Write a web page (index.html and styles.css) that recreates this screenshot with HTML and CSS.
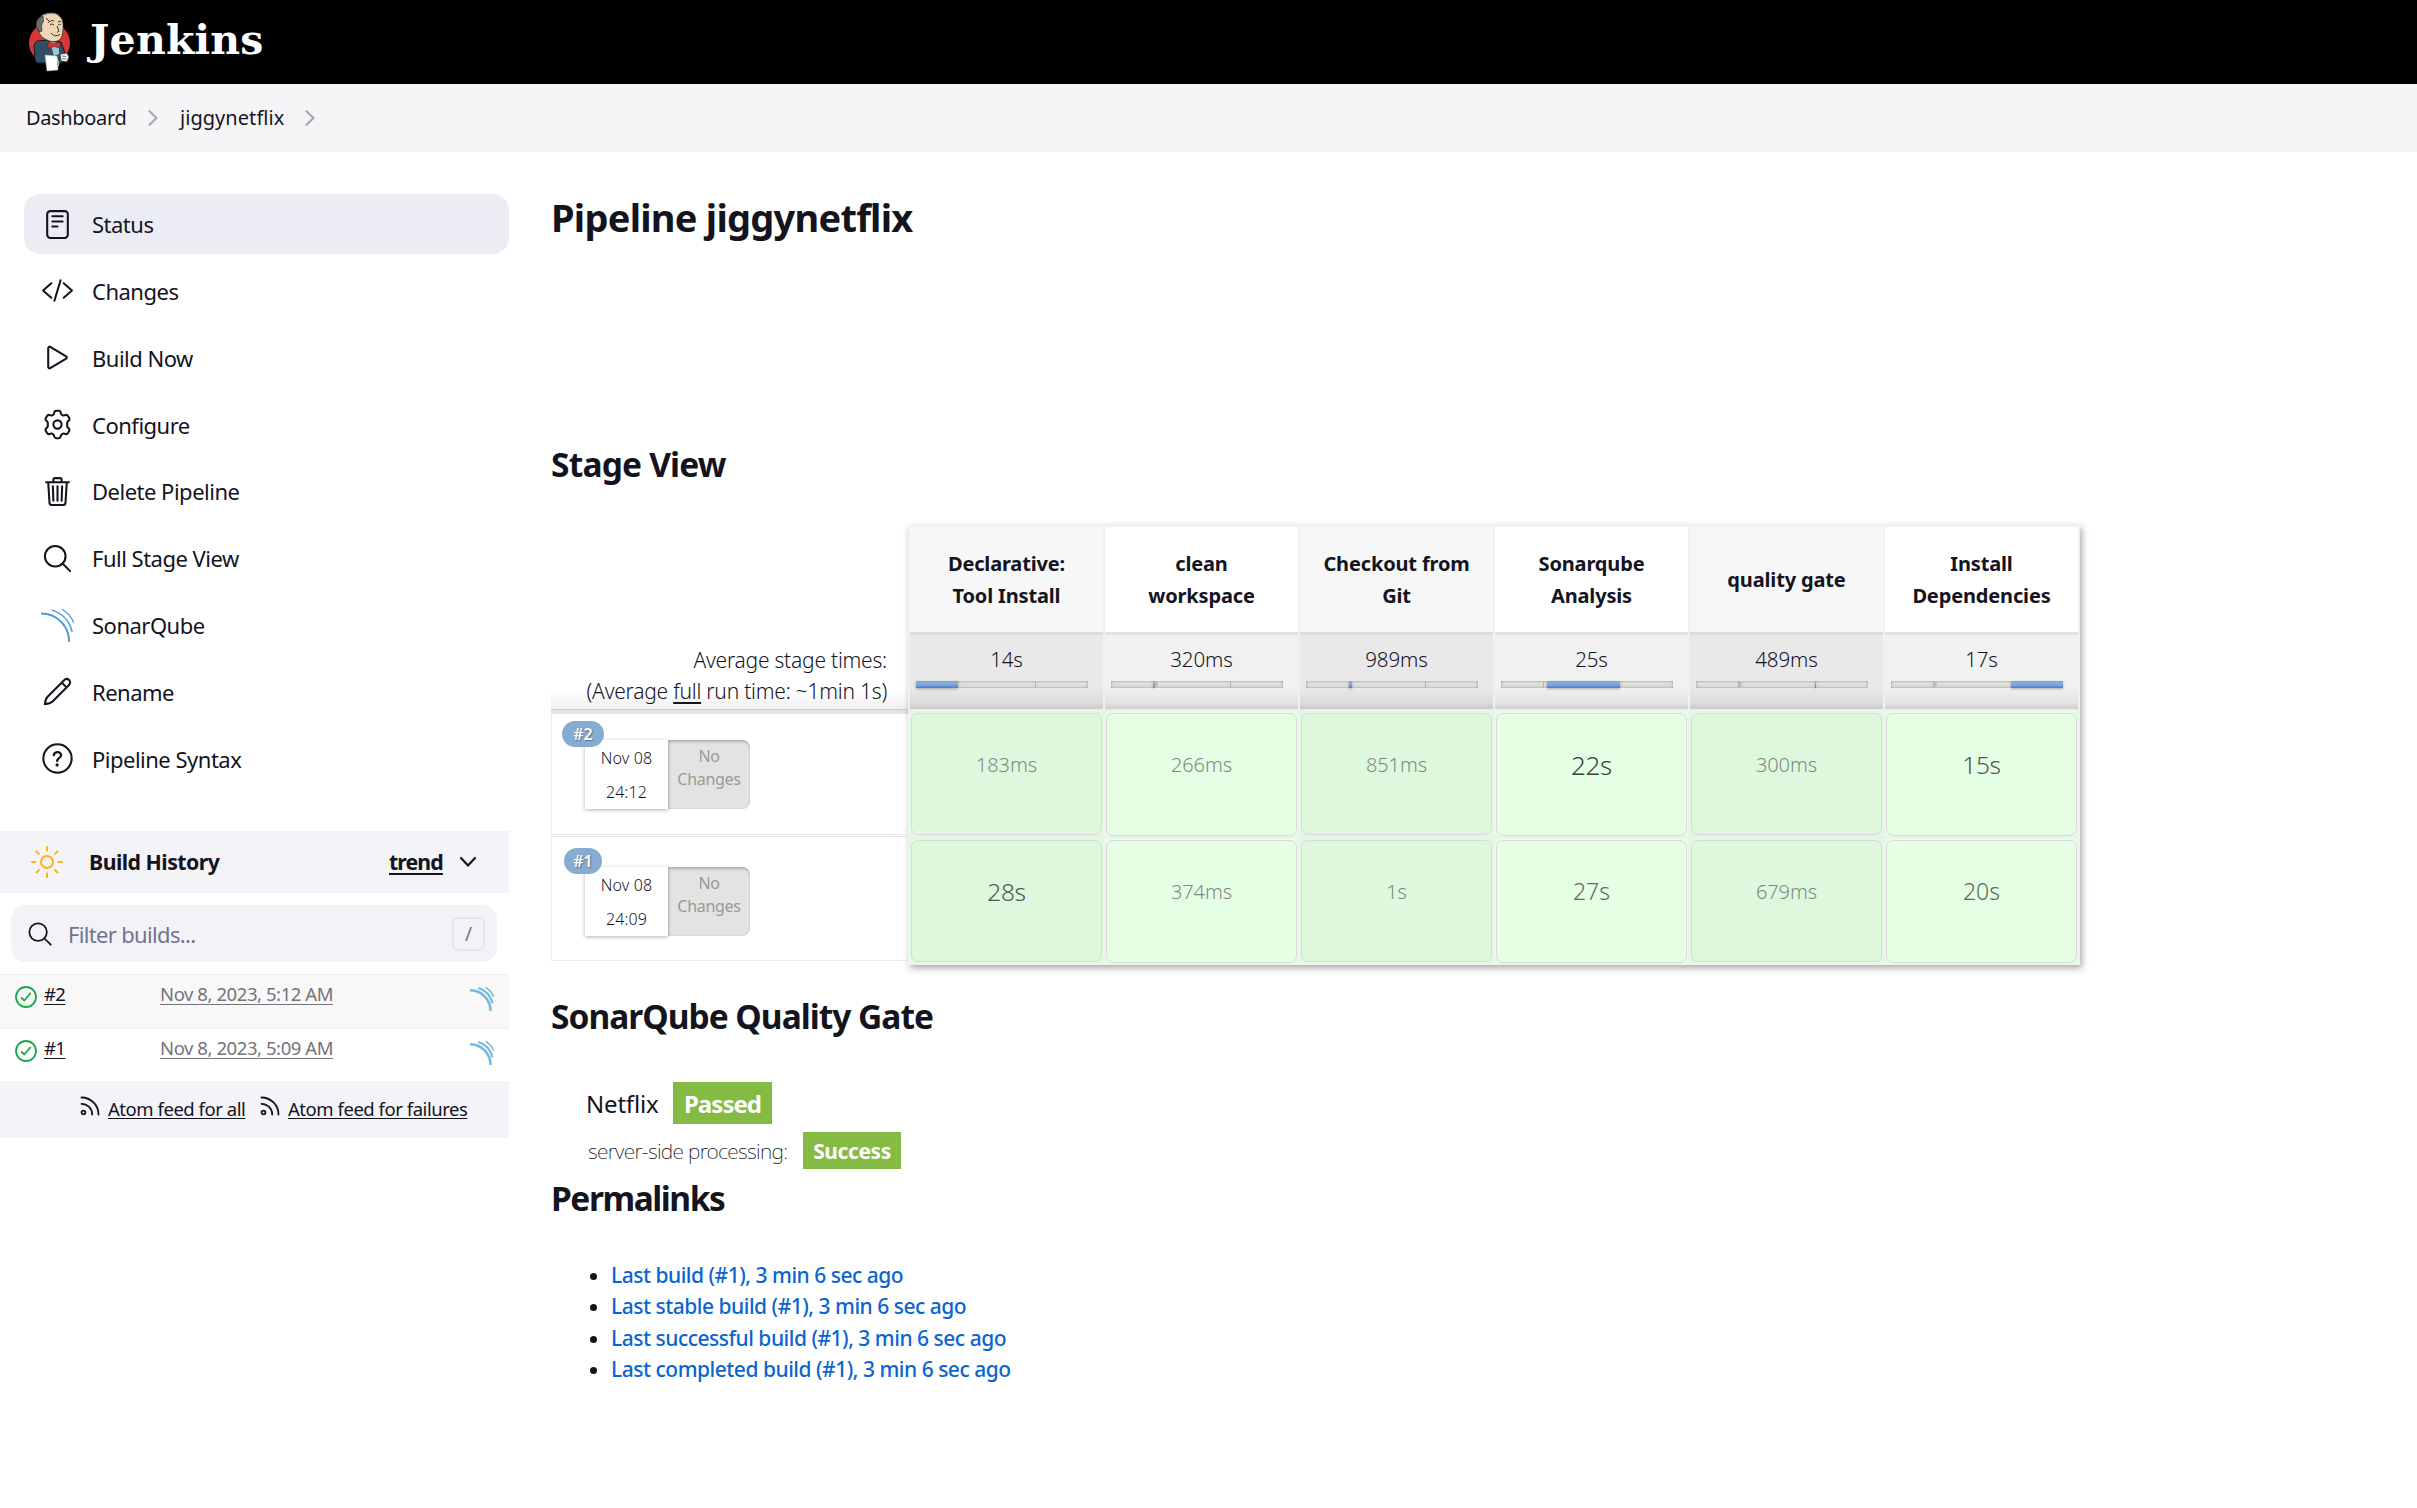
FILE: index.html
```html
<!DOCTYPE html>
<html lang="en">
<head>
<meta charset="utf-8">
<title>jiggynetflix [Jenkins]</title>
<link rel="stylesheet" href="styles.css">
</head>
<body>
<svg class="defs" width="0" height="0" aria-hidden="true">
  <symbol id="sonar" viewBox="0 0 33 33"><g fill="none" stroke="#4b9fd5"><path stroke-width="2" d="M0 4.6C16 4.6 28.2 17 28.2 33"/><path stroke-width="1.6" d="M11.5 1.3C21 4.3 28.500 12 31 22.300"/><path stroke-width="1.300" d="M21.500.5C26.300 3.300 30.300 8 32.600 13.300"/></g></symbol>
  <symbol id="sonar-s" viewBox="0 0 33 33"><g fill="none" stroke="#74b6e0"><path stroke-width="3.400" d="M0 4.6C16 4.6 28.2 17 28.2 33"/><path stroke-width="2.800" d="M11.5 1.3C21 4.3 28.500 12 31 22.300"/><path stroke-width="2.200" d="M21.500.5C26.300 3.300 30.300 8 32.600 13.300"/></g></symbol>
  <symbol id="search" viewBox="0 0 512 512"><g fill="none" stroke="currentColor" stroke-width="32" stroke-linecap="round"><circle cx="221" cy="221" r="160"/><path d="M338.300 338.300L452 452"/></g></symbol>
  <symbol id="rss" viewBox="0 0 20 20"><g fill="none" stroke="currentColor" stroke-width="1.800" stroke-linecap="round"><circle cx="3.500" cy="16.500" r="1.900"/><path d="M1.500 7.800A10.700 10.700 0 0 1 12.200 18.500M1.500 1.500A17 17 0 0 1 18.500 18.500"/></g></symbol>
  <symbol id="ok" viewBox="0 0 22 22"><g fill="none" stroke="#1ea64b" stroke-width="1.800" stroke-linecap="round" stroke-linejoin="round"><circle cx="11" cy="11" r="10"/><path d="M15.300 7.500L9.300 14.500 6.700 12"/></g></symbol>
  <symbol id="chev" viewBox="0 0 10 16"><path d="M1.500 1.200L8.500 8l-7 6.800" fill="none" stroke="#a6a6bf" stroke-width="2.200" stroke-linecap="round" stroke-linejoin="round"/></symbol>
</svg>

<header class="header">
  <svg class="butler" viewBox="0 0 44 60">
    <ellipse cx="21.500" cy="31" rx="20.500" ry="20" fill="#d33833"/>
    <path d="M9 29L20 28l13 2 4 11-3 10H9L7 48 6 33z" fill="#2f4f66" stroke="#0e1a24" stroke-width="1"/>
    <path d="M22 30l9 1 0 11-5 2z" fill="#9cc3d8"/>
    <path d="M13 4C19-1 30 0 34 7c2 6 1 12 0 17-2 6-9 7-15 4-6-2-9-8-9-14z" fill="#f0d6b7" stroke="#2b2522" stroke-width=".7"/>
    <path d="M15 4C10 5 7 10 8.500 15l3 5 2.500-1-.500-6 2-4z" fill="#6d6b6d" stroke="#222" stroke-width=".6"/>
    <path d="M16 3C20 1 28 0 31 4" fill="none" stroke="#8a8585" stroke-width="1.200"/>
    <path d="M22 13c1.500-1.500 3-1 4 0M30 13c1-1 2-1 3 0M29 14l2 5-2 1.500M23 21c3 4 7 3 9 1M18 6l3 3M20 11c1-2 4-3 6-2M30 10l3-1" fill="none" stroke="#3a2a22" stroke-width="1"/>
    <path d="M20 30l6 2 6-2v6l-6-1.500-6 2z" fill="#d33833" stroke="#611" stroke-width=".6"/>
    <path d="M17 43l12 1 1 14-11 1z" fill="#fff" stroke="#aaa" stroke-width=".6"/>
    <path d="M32 42l7-1 2 4-2 5-6-1z" fill="#f7f2ee" stroke="#333" stroke-width=".8"/>
    <path d="M34 44l4 .5M34 46.500l4 .500" stroke="#444" stroke-width=".7"/>
    <path d="M29 46l2 6-2 4" fill="none" stroke="#ddd" stroke-width="1"/>
  </svg>
  <span class="brand">Jenkins</span>
</header>

<nav class="crumbs">
  <span class="crumb-a">Dashboard</span>
  <svg class="chev"><use href="#chev"/></svg>
  <span class="crumb-b">jiggynetflix</span>
  <svg class="chev"><use href="#chev"/></svg>
</nav>

<div class="page">
  <aside class="side">
    <ul class="tasks">
      <li class="task active"><svg class="ico" viewBox="0 0 512 512"><rect x="96" y="48" width="320" height="416" rx="48"/><path d="M176 128h160M176 208h160M176 288h80"/></svg><span>Status</span></li>
      <li class="task"><svg class="ico" viewBox="0 0 512 512"><path d="M160 368L32 256l128-112M352 368l128-112-128-112M304 96l-96 320"/></svg><span>Changes</span></li>
      <li class="task"><svg class="ico" viewBox="0 0 512 512"><path d="M112 111v290c0 17.440 17 28.520 31 20.160l247.900-148.370c12.120-7.250 12.120-26.330 0-33.580L143 90.840c-14-8.360-31 2.720-31 20.160z"/></svg><span>Build Now</span></li>
      <li class="task"><svg class="ico" viewBox="0 0 512 512"><circle cx="256" cy="256" r="64"/><path d="M206 68Q212 42 236 42h40q24 0 30 26l4 16q5 18 21 26 16 9 33 4l18-5q23-7 36 14l20 34q12 20-5 37l-14 13q-13 12-13 31v36q0 19 13 31l14 13q17 17 5 37l-20 34q-13 21-36 14l-18-5q-17-5-33 4-16 8-21 26l-4 16q-6 26-30 26h-40q-24 0-30-26l-4-16q-5-18-21-26-16-9-33-4l-18 5q-23 7-36-14l-20-34q-12-20 5-37l14-13q13-12 13-31v-36q0-19-13-31l-14-13q-17-17-5-37l20-34q13-21 36-14l18 5q17 5 33-4 16-8 21-26z"/></svg><span>Configure</span></li>
      <li class="task"><svg class="ico" viewBox="0 0 512 512"><path d="M112 112l20 320c.950 18.490 14.400 32 32 32h184c17.670 0 30.870-13.510 32-32l20-320M80 112h352M192 112V72a24 24 0 0124-24h80a24 24 0 0124 24v40M256 176v224M184 176l8 224M328 176l-8 224"/></svg><span>Delete Pipeline</span></li>
      <li class="task"><svg class="ico"><use href="#search"/></svg><span>Full Stage View</span></li>
      <li class="task"><svg class="ico sonar"><use href="#sonar"/></svg><span>SonarQube</span></li>
      <li class="task"><svg class="ico" viewBox="0 0 512 512"><path d="M60 452C64 412 76 362 102 336L358 80C380 58 412 56 436 78 C458 100 456 132 434 154L180 410C152 436 102 448 60 452ZM322 118L396 192"/></svg><span>Rename</span></li>
      <li class="task"><svg class="ico" viewBox="0 0 512 512"><circle cx="256" cy="256" r="220"/><path d="M200 202s1-17 20-32c11-9 24-12 36-12 11 0 21 2 27 4 10 5 29 17 29 41 0 26-17 38-36 51s-25 27-25 40" stroke-width="36"/><circle cx="250" cy="356" r="12" stroke-width="28"/></svg><span>Pipeline Syntax</span></li>
    </ul>

    <section class="history">
      <div class="h-head">
        <svg class="sun" viewBox="0 0 34 34"><circle cx="17" cy="17" r="6"/><path d="M17 2v3.500M17 28.500V32M2 17h3.500M28.500 17H32M6.400 6.400l2.500 2.500M25.100 25.100l2.500 2.500M6.400 27.600l2.500-2.500M25.100 8.900l2.500-2.500"/></svg>
        <b class="h-title">Build History</b>
        <a class="trend">trend</a>
        <svg class="down" viewBox="0 0 18 12"><path d="M2 2l7 7.500L16 2" fill="none" stroke="#14141f" stroke-width="2.200" stroke-linecap="round" stroke-linejoin="round"/></svg>
      </div>
      <div class="filter">
        <svg class="f-ico"><use href="#search"/></svg>
        <span class="f-text">Filter builds...</span>
        <span class="key">/</span>
      </div>
      <div class="build odd"><svg class="ok"><use href="#ok"/></svg><a class="num">#2</a><a class="date">Nov 8, 2023, 5:12 AM</a><svg class="mini"><use href="#sonar-s"/></svg></div>
      <div class="build"><svg class="ok"><use href="#ok"/></svg><a class="num">#1</a><a class="date">Nov 8, 2023, 5:09 AM</a><svg class="mini"><use href="#sonar-s"/></svg></div>
      <div class="feeds">
        <svg class="rss"><use href="#rss"/></svg><a class="feed-all">Atom feed for all</a>
        <svg class="rss"><use href="#rss"/></svg><a>Atom feed for failures</a>
      </div>
    </section>
  </aside>

  <main class="main">
    <h1>Pipeline jiggynetflix</h1>
    <h2 class="sv">Stage View</h2>
    <div class="stage">
      <div class="runs">
        <div class="avg-label">Average stage times:<br>(Average <u>full</u> run time: ~1min 1s)</div>
        <div class="run"><span class="badge">#2</span><div class="card"><div class="when">Nov 08<br>24:12</div><div class="nochg">No<br>Changes</div></div></div>
        <div class="run"><span class="badge one">#1</span><div class="card"><div class="when">Nov 08<br>24:09</div><div class="nochg">No<br>Changes</div></div></div>
      </div>
      <div class="grid">
        <div class="col dark">
          <div class="name">Declarative:<br>Tool Install</div>
          <div class="avg"><span>14s</span><div class="track"><i class="fill" style="left:0;width:42px"></i><i class="tick" style="left:119px"></i></div></div>
          <div class="cell"><div class="box s">183ms</div></div>
          <div class="cell"><div class="box l">28s</div></div>
        </div>
        <div class="col">
          <div class="name">clean<br>workspace</div>
          <div class="avg"><span>320ms</span><div class="track"><i class="fill" style="left:42px;width:1px"></i><i class="tick wide" style="left:43px"></i><i class="tick" style="left:119px"></i></div></div>
          <div class="cell"><div class="box s">266ms</div></div>
          <div class="cell"><div class="box s">374ms</div></div>
        </div>
        <div class="col dark">
          <div class="name">Checkout from<br>Git</div>
          <div class="avg"><span>989ms</span><div class="track"><i class="fill" style="left:43px;width:3px"></i><i class="tick" style="left:119px"></i></div></div>
          <div class="cell"><div class="box s">851ms</div></div>
          <div class="cell"><div class="box s">1s</div></div>
        </div>
        <div class="col">
          <div class="name">Sonarqube<br>Analysis</div>
          <div class="avg"><span>25s</span><div class="track"><i class="tick" style="left:42px"></i><i class="fill" style="left:46px;width:73px"></i></div></div>
          <div class="cell"><div class="box xl">22s</div></div>
          <div class="cell"><div class="box m">27s</div></div>
        </div>
        <div class="col dark">
          <div class="name">quality gate</div>
          <div class="avg"><span>489ms</span><div class="track"><i class="tick wide" style="left:42px"></i><i class="fill" style="left:119px;width:1px"></i></div></div>
          <div class="cell"><div class="box s">300ms</div></div>
          <div class="cell"><div class="box s">679ms</div></div>
        </div>
        <div class="col">
          <div class="name">Install<br>Dependencies</div>
          <div class="avg"><span>17s</span><div class="track"><i class="tick wide" style="left:42px"></i><i class="fill" style="left:120px;width:52px"></i></div></div>
          <div class="cell"><div class="box l">15s</div></div>
          <div class="cell"><div class="box m">20s</div></div>
        </div>
      </div>
    </div>

    <h2 class="qg">SonarQube Quality Gate</h2>
    <div class="gate"><span class="proj">Netflix</span><span class="pass">Passed</span></div>
    <div class="gate2"><span class="ssp">server-side processing:</span><span class="pass small">Success</span></div>

    <h2 class="pl">Permalinks</h2>
    <ul class="links">
      <li><a>Last build (#1), 3 min 6 sec ago</a></li>
      <li><a>Last stable build (#1), 3 min 6 sec ago</a></li>
      <li><a>Last successful build (#1), 3 min 6 sec ago</a></li>
      <li><a>Last completed build (#1), 3 min 6 sec ago</a></li>
    </ul>
  </main>
</div>
</body>
</html>
```
FILE: styles.css
```css
* { box-sizing: border-box; }
body { margin: 0; background: #fff; color: #14141f; font-family: "Noto Sans", "Open Sans", sans-serif; font-size: 22px; }
svg { display: block; flex: none; }
.defs { position: absolute; }
h1, h2, ul { margin: 0; padding: 0; }
a, span, b { white-space: nowrap; }

.header { height: 84px; background: #000; display: flex; padding-left: 28px; }
.butler { width: 44px; height: 60px; margin-top: 12px; }
.brand { margin-left: 18px; color: #fff; font: bold 41px/81px "DejaVu Serif", serif; letter-spacing: .2px; }

.crumbs { height: 68px; background: #f5f5f8; display: flex; align-items: center; padding-left: 26px; font-size: 20px; line-height: 70px; }
.crumb-a { width: 122px; letter-spacing: -.35px; }
.crumb-b { width: 105px; margin-left: 22px; margin-right: 20px; letter-spacing: .05px; }
.chev { width: 10px; height: 16px; }

.page { display: flex; align-items: flex-start; }
.side { width: 509px; padding-top: 42px; }
.tasks { list-style: none; padding-left: 24px; height: 637px; }
.task { height: 60px; margin-bottom: 6.85px; display: flex; align-items: center; padding-left: 17px; border-radius: 16px; letter-spacing: -.5px; }
.task.active { background: #ececf5; }
.task span { line-height: 60px; }
.ico { width: 33px; height: 33px; margin-right: 18px; fill: none; stroke: currentColor; stroke-width: 32; stroke-linecap: round; stroke-linejoin: round; }

.h-head { height: 62px; background: #f3f3f8; display: flex; align-items: center; padding-left: 30px; line-height: 58px; }
.sun { width: 34px; height: 34px; fill: none; stroke: #ffb117; stroke-width: 2; stroke-linecap: round; }
.h-title { font-weight: 700; width: 300px; margin-left: 25px; letter-spacing: -.53px; font-size: 21.300px; }
.trend { font-size: 21.300px; font-weight: 700; letter-spacing: -.9px; text-decoration: underline; text-decoration-thickness: 2px; text-underline-offset: 3px; }
.down { width: 18px; height: 12px; margin-left: 16px; }
.filter { height: 57px; margin: 12px 12px 12px 11px; border-radius: 15px; background: #f2f2f7; display: flex; align-items: center; padding: 0 12px 0 15px; }
.f-ico { width: 28px; height: 28px; }
.f-text { flex: 1; margin-left: 14px; color: #737390; letter-spacing: -.67px; line-height: 58px; }
.key { width: 33px; height: 34px; border: 2px solid #e5e5ee; border-radius: 6px; color: #737390; font-size: 19px; line-height: 30px; text-align: center; }
.build { height: 53.500px; border-top: 1px solid #f0f0f3; display: flex; padding: 10px 15px 0; font-size: 18.500px; line-height: 17px; }
.build.odd { background: #f8f8f8; }
.ok { width: 22px; height: 22px; margin-top: 1px; }
.build a { text-decoration: underline; text-underline-offset: 3px; height: 30px; }
.num { width: 116px; margin-left: 7px; letter-spacing: -.6px; }
.date { flex: 1; color: #73737a; letter-spacing: -.43px; }
.mini { width: 24px; height: 24px; margin-top: 2px; }
.feeds { height: 57px; background: #f3f3f8; display: flex; padding: 15px 0 0 80px; font-size: 18.500px; line-height: 26px; letter-spacing: -.46px; }
.feeds a { text-decoration: underline; text-underline-offset: 2px; }
.rss { width: 20px; height: 20px; margin-right: 8px; }
.feed-all { width: 152px; }

.main { margin-left: 42px; width: 1530px; }
h1, h2 { font-weight: 700; }
h1 { font-size: 38px; line-height: 51px; padding-top: 40px; height: 288px; letter-spacing: -.75px; }
h2 { font-size: 33.500px; line-height: 49px; height: 50px; }
.sv { letter-spacing: -.8px; }
.qg { letter-spacing: -1px; margin-top: 26px; line-height: 51px; }
.pl { letter-spacing: -1.450px; margin-top: 4px; line-height: 50px; }

.stage { display: flex; margin-top: 35px; height: 440px; }
.runs { width: 357px; padding-top: 103px; }
.avg-label { height: 86px; border-bottom: 4px solid #e4e4e4; padding: 17px 21px 0 0; text-align: right; font-size: 21px; font-weight: 300; line-height: 31px; letter-spacing: -.23px; background: linear-gradient(#fff 75%, #efefef); box-shadow: inset 0 -1px #ccc; white-space: nowrap; }
.avg-label u { text-decoration-thickness: 2px; text-underline-offset: 3px; }
.run { height: 121px; margin-bottom: 1px; border: 1px solid #ebebeb; border-top: 0; padding: 26px 0 0 33px; position: relative; }
.run + .run { border-top: 1px solid #e6e6e6; height: 125px; padding-top: 30px; margin-bottom: 0; }
.badge { position: absolute; left: 10px; top: 7px; height: 26px; width: 42px; border-radius: 13px; background: #87acd1; color: #fff; font: 600 16px/26px "Noto Sans", sans-serif; text-align: center; text-shadow: 1px 1px 1px rgba(0,0,0,.35); z-index: 2; }
.badge.one { left: 12px; top: 11px; width: 38px; }
.card { display: flex; width: 165px; height: 69px; text-align: center; font-size: 16px; }
.when { width: 83px; background: #fff; box-shadow: 0 1px 4px rgba(0,0,0,.3); font-weight: 300; line-height: 34px; padding-top: 1px; letter-spacing: .1px; }
.nochg { width: 82px; background: #e3e3e3; border-radius: 0 8px 8px 0; box-shadow: inset 1px 2px 3px rgba(0,0,0,.22), inset 0 0 2px rgba(0,0,0,.15); color: #999; line-height: 23px; padding-top: 5px; letter-spacing: -.3px; z-index: 1; }

.grid { display: flex; align-items: flex-start; align-self: flex-start; width: 1172px; border: 2px solid #f1f1f1; box-shadow: 2px 3px 7px rgba(0,0,0,.35); background: #fff; text-align: center; }
.col { width: 195px; flex: none; border-right: 2px solid #f0f0f0; }
.col:last-child { width: 193px; border-right: 0; }
.name { height: 105px; display: flex; align-items: center; justify-content: center; padding-top: 1px; font-size: 20px; font-weight: 700; line-height: 32px; letter-spacing: -.15px; white-space: nowrap; background: #fff; }
.dark .name { background: #f7f7f7; }
.avg { height: 77px; border-top: 3px solid #e2e2e2; padding: 9px 0 0 6px; background: linear-gradient(#f1f1f1 72%, #e2e2e2 92%, #cfcfcf); }
.avg span { display: block; padding-right: 6px; font-size: 20.500px; font-weight: 300; line-height: 30px; letter-spacing: -.1px; }
.dark .avg { border-color: #dcdcdc; background: linear-gradient(#e9e9e9 72%, #dbdbdb 92%, #c8c8c8); }
.track { position: relative; width: 172px; height: 7px; margin-top: 7px; background: #e0e0e0; box-shadow: inset 0 0 3px rgba(0,0,0,.35); }
.fill { position: absolute; top: 0; height: 7px; background: linear-gradient(#82aad6 50%, #4a7bd5); box-shadow: 0 1px 3px rgba(0,0,0,.3); z-index: 1; }
.tick { position: absolute; top: 0; width: 1px; height: 7px; background: #b4b4b4; }
.tick.wide { width: 4px; background: linear-gradient(90deg, #b0b0b0, #ccc); }
.cell { height: 127px; padding: 2px 1px 3px; background: #e4ffe4; border-top: 2px solid #eee; }
.box { height: 123px; border: 1px solid #d6dcd6; border-radius: 7px; background: #e4ffe4; font-weight: 300; line-height: 103px; }
.dark .cell { background: #e0fae0; }
.dark .box { background: #def8de; height: 122px; }
.box.s { font-size: 20px; color: #7f8a7f; letter-spacing: -.1px; line-height: 101px; }
.box.m { font-size: 23px; color: #606860; line-height: 101px; }
.box.l { font-size: 24.500px; color: #505650; letter-spacing: -.3px; line-height: 102px; }
.box.xl { font-size: 26px; color: #3a403a; letter-spacing: -.3px; line-height: 102px; }

.gate { display: flex; margin-top: 41px; padding-left: 35px; height: 42px; font-size: 24px; line-height: 44px; }
.proj { width: 87px; letter-spacing: -.2px; }
.pass { width: 99px; height: 42px; background: #85bb43; color: #fff; font-weight: 700; text-align: center; letter-spacing: -.95px; }
.gate2 { display: flex; margin-top: 8px; padding-left: 37px; height: 37px; font-size: 21px; line-height: 38px; }
.ssp { width: 215px; font-weight: 200; letter-spacing: -.7px; color: #111; }
.small { width: 98px; height: 37px; letter-spacing: -.4px; }

.links { margin-top: 37px; padding-left: 60px; font-size: 21px; font-weight: 500; line-height: 31.300px; letter-spacing: -.49px; }
.links a { color: #0b65d1; }
```
